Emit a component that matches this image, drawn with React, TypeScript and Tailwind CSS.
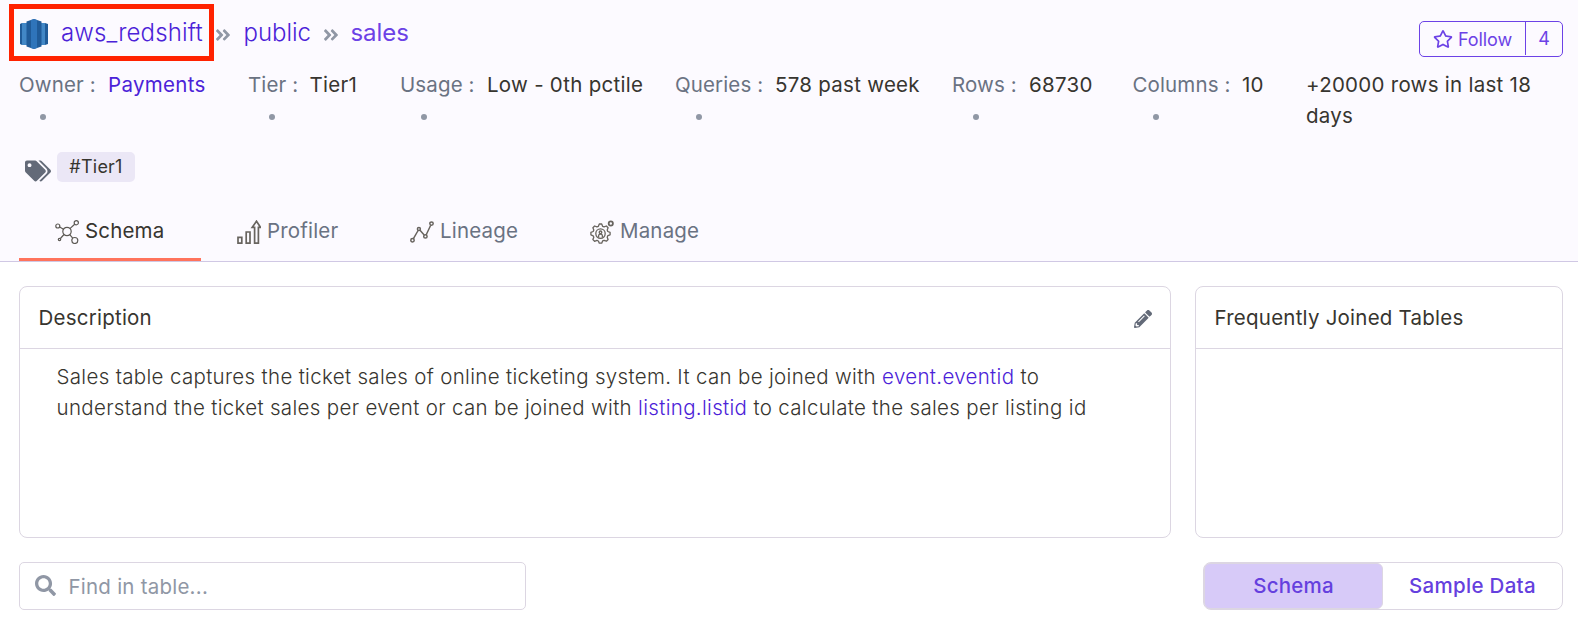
import React from 'react';
import { FaAngleDoubleRight, FaPencilAlt, FaRegStar, FaSearch, FaTags } from 'react-icons/fa';

type Meta = { label: string; value: string; link?: boolean; width: string; labelWidth: string };

const metas: Meta[] = [
  { label: 'Owner :', value: 'Payments', link: true, width: 'w-[229px]', labelWidth: 'w-[89px]' },
  { label: 'Tier :', value: 'Tier1', width: 'w-[152px]', labelWidth: 'w-[61.5px]' },
  { label: 'Usage :', value: 'Low - 0th pctile', width: 'w-[275px]', labelWidth: 'w-[87px]' },
  { label: 'Queries :', value: '578 past week', width: 'w-[277px]', labelWidth: 'w-[100px]' },
  { label: 'Rows :', value: '68730', width: 'w-[180.5px]', labelWidth: 'w-[77px]' },
  { label: 'Columns :', value: '10', width: 'w-[173.5px]', labelWidth: 'w-[109.5px]' },
];

function RedshiftLogo() {
  return (
    <svg width="28" height="30" viewBox="0 0 28 30">
      <path d="M0 5l2-1v22l-2-1z" fill="#205b99" />
      <path d="M2 4h5v22H2z" fill="#4287c6" />
      <path d="M21 4h4v22h-4z" fill="#4287c6" />
      <path d="M25 4l3 1v20l-3 1z" fill="#205b99" />
      <path d="M14 0L6.500 2.500v25L14 30z" fill="#205b99" />
      <path d="M14 0l7.500 2.500v25L14 30z" fill="#205b99" />
      <path d="M11 1l3-1 3 1v28l-3 1-3-1z" fill="#2f74ba" />
    </svg>
  );
}

function SchemaIcon() {
  return (
    <svg width="24" height="24" viewBox="0 0 24 24" fill="none" stroke="#5d5a55" strokeWidth="1.200">
      <circle cx="12" cy="11.500" r="4.200" />
      <circle cx="2.800" cy="6" r="2" />
      <circle cx="21.300" cy="2.700" r="2.100" />
      <circle cx="4.500" cy="19.500" r="1.200" />
      <circle cx="19.800" cy="20.500" r="3" />
      <path d="M4.700 7l3.800 2.200M19.700 4.200l-4.800 4.400M5.400 18.500l3.600-4M14.800 14.600l2.900 3.500" />
    </svg>
  );
}

function ProfilerIcon() {
  return (
    <svg width="24" height="24" viewBox="0 0 24 24" fill="none" stroke="#68645f" strokeWidth="1.700">
      <path d="M1 17.400h3.800v5.700H1zM9.200 12H13v11.100H9.200zM17.600 23.100V7.300h-2.400L19.500 1.200l4 6.100h-2.100v15.800z" />
    </svg>
  );
}

function LineageIcon() {
  return (
    <svg width="24" height="24" viewBox="0 0 24 24" fill="none" stroke="#68645f" strokeWidth="1.500">
      <circle cx="2.500" cy="20.300" r="1.700" />
      <circle cx="8.900" cy="9" r="1.500" />
      <circle cx="15.400" cy="16.400" r="1.700" />
      <circle cx="21.500" cy="3.600" r="1.700" />
      <path d="M3.400 18.700l4.700-8.200M10 10.200l4.200 4.800M16.200 14.800l4.500-9.500" />
    </svg>
  );
}

function ManageIcon() {
  return (
    <svg width="24" height="24" viewBox="0 0 24 24" fill="none" stroke="#68645f" strokeWidth="1.300">
      <path
        strokeLinejoin="round"
        d="M9.300 4h2.400l.9 2.300 1.500.6L16.400 6l1.700 1.700-.9 2.300.6 1.500 2.300.9v2.400l-2.300.9-.6 1.500.9 2.300-1.700 1.700-2.300-.9-1.500.6-.9 2.300H9.300L8.400 21l-1.500-.6-2.300.9-1.700-1.700.9-2.300-.6-1.500-2.300-1v-2.400l2.300-.9.6-1.500-.9-2.300L4.600 6l2.300.9 1.500-.6z"
      />
      <circle cx="10.500" cy="13.600" r="4.700" />
      <circle cx="10.500" cy="12.300" r="1.300" />
      <path d="M8.600 17v-1.300c0-.9.800-1.500 1.900-1.500s1.900.6 1.900 1.500V17" />
      <circle cx="20.800" cy="3.500" r="2.100" strokeWidth="1.800" />
    </svg>
  );
}

const tabs = [
  { name: 'Schema', icon: <SchemaIcon />, cls: 'w-[182px] text-[#37352f] border-[#ff735c]' },
  { name: 'Profiler', icon: <ProfilerIcon />, cls: 'w-[173px] text-gray-500 border-transparent' },
  { name: 'Lineage', icon: <LineageIcon />, cls: 'w-[180px] text-gray-500 border-transparent' },
  { name: 'Manage', icon: <ManageIcon />, cls: 'w-[182px] text-gray-500 border-transparent' },
];

export default function App() {
  return (
    <div className="h-[624px] w-[1578px] overflow-hidden bg-white font-['Inter',sans-serif] text-[20.500px] leading-[31px] tracking-[0.23px] text-[#37352f]">
      <header className="flex h-[262px] flex-col border-b border-[#d0c8e4] bg-[#fcfaff]">
        <div className="flex h-[69px] items-start justify-between pl-[9px] pr-[15px]">
          <div className="flex items-start pt-1">
            <div className="flex h-[57px] w-[205px] items-center whitespace-nowrap border-[5px] border-[#ff2200] pl-[6px] pt-[3px]">
              <RedshiftLogo />
              <span className="ml-[13px] pb-[3px] text-[24px] font-light tracking-[0.13px] text-[#4b22d8]">aws_redshift</span>
            </div>
            <div className="flex h-[57px] items-center text-[24px] tracking-[-0.05px] text-[#6c42e6]">
              <FaAngleDoubleRight className="mt-[5px] size-[18px] text-[#9097a5]" />
              <span className="ml-[11.500px] w-[67px] font-light text-[#4b22d8]">public</span>
              <FaAngleDoubleRight className="ml-[11px] mt-[5px] size-[18px] text-[#9097a5]" />
              <span className="ml-[11px]">sales</span>
            </div>
          </div>
          <div className="mt-[21px] flex h-9 w-[144px] rounded-[5px] border border-[#6c42e6] text-[18px] tracking-normal text-[#6c42e6]">
            <div className="mb-px flex w-[106px] items-center border-r border-[#6c42e6] pl-[13px] pt-px">
              <FaRegStar className="size-[20px]" />
              <span className="ml-[5px] tracking-[-0.1px]">Follow</span>
            </div>
            <div className="flex flex-1 items-center justify-center pb-0.5">4</div>
          </div>
        </div>

        <div className="flex h-[83px] items-start whitespace-nowrap pl-[19px]">
          {metas.map((m) => (
            <div key={m.label} className={`shrink-0 ${m.width}`}>
              <div className="flex">
                <span className={`shrink-0 tracking-[0.12px] text-gray-500 ${m.labelWidth}`}>{m.label}</span>
                <span className={m.link ? 'tracking-[0.3px] text-[#4b22d8]' : 'tracking-[0.27px]'}>{m.value}</span>
              </div>
              <div className="flex h-[34px] items-center pl-[20.500px]">
                <span className="size-[6px] rounded-full bg-[#9097a5]" />
              </div>
            </div>
          ))}
          <div className="w-[250px] whitespace-normal tracking-[0.27px]">+20000 rows in last 18 days</div>
        </div>

        <div className="flex h-[30px] items-start pl-[25px]">
          <FaTags className="mt-[6px] size-[26px] text-[#636a78]" />
          <span className="ml-[6px] flex h-[30px] w-[78px] items-center justify-center rounded-[5px] bg-[#ebe7f6] pb-0.5 text-[18px]">#Tier1</span>
        </div>

        <nav className="mt-auto flex pl-[19px]">
          {tabs.map((t) => (
            <div key={t.name} className={`flex h-[61px] items-center border-b-[3px] pl-[36px] pt-1 ${t.cls}`}>
              <span className="mt-[2px]">{t.icon}</span>
              <span className="-mt-0.5 ml-[6px] tracking-[0.17px]">{t.name}</span>
            </div>
          ))}
        </nav>
      </header>

      <main className="flex flex-col pl-[19px] pr-[15px] pt-6">
        <div className="flex h-[252px] gap-6">
          <section className="w-[1152px] rounded-lg border border-[#dcd6e2]">
            <div className="flex h-[62px] items-center justify-between border-b border-[#dcd6e2] pl-[18.500px] pr-[18px]">
              <h2>Description</h2>
              <FaPencilAlt className="mt-0.5 size-[18px] text-[#636a78]" />
            </div>
            <p className="whitespace-nowrap pl-[36.500px] pt-3 font-light tracking-[0.325px]">
              Sales table captures the ticket sales of online ticketing system. It can be joined with{' '}
              <a className="text-[#4b22d8]">event.eventid</a> to
              <br />
              understand the ticket sales per event or can be joined with{' '}
              <a className="text-[#4b22d8]">listing.listid</a> to calculate the sales per listing id
            </p>
          </section>
          <section className="flex-1 rounded-lg border border-[#dcd6e2]">
            <h2 className="flex h-[62px] items-center border-b border-[#dcd6e2] pl-[18.500px]">Frequently Joined Tables</h2>
          </section>
        </div>

        <div className="mt-6 flex h-12 justify-between">
          <div className="flex w-[507px] items-center rounded-[5px] border border-[#dcd6e2] pl-[15px] text-[#9097a5]">
            <FaSearch className="mb-0.5 size-[21px]" />
            <span className="ml-[12.500px]">Find in table...</span>
          </div>
          <div className="flex w-[360px] rounded-lg border border-[#dcd6e2] font-medium text-[#6540de]">
            <div className="flex w-[179px] items-center justify-center rounded-md border border-[#dcd6e2] bg-[#d7caf8] pb-0.5">Schema</div>
            <div className="flex flex-1 items-center justify-center pb-0.5 tracking-[0.3px]">Sample Data</div>
          </div>
        </div>
      </main>
    </div>
  );
}
